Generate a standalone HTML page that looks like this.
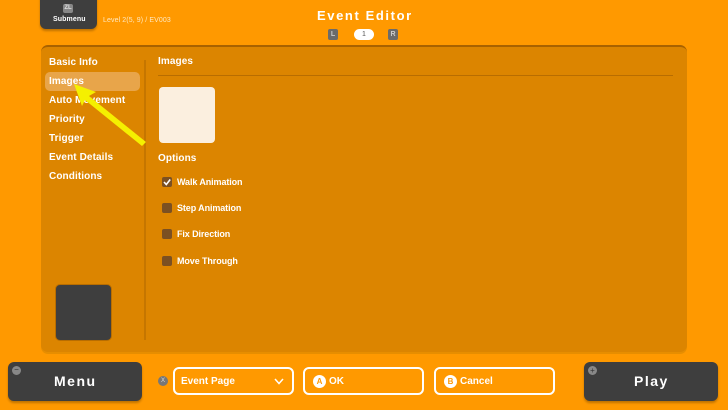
<!DOCTYPE html>
<html><head><meta charset="utf-8"><style>
*{margin:0;padding:0;box-sizing:border-box}
body{width:728px;height:410px;background:#ff9900;font-family:"Liberation Sans","DejaVu Sans",sans-serif;color:#fff;position:relative;overflow:hidden}
.a{position:absolute}
.dark{background:#3e3e3e;border-radius:6px;box-shadow:0 2px 2px rgba(0,0,0,.25)}
.t{font-size:10px;font-weight:bold;letter-spacing:.1px;white-space:nowrap}
.cb{width:10px;height:10px;background:#7b5022;border-radius:2px;position:absolute}
.btn{position:absolute;top:367px;height:28px;border:2px solid #fff;border-radius:6px;font-size:10px;font-weight:bold;padding-left:6px;display:flex;align-items:center}
.circ{display:inline-block;width:13px;height:13px;border-radius:50%;background:#fff;color:#ff9900;font-size:8px;text-align:center;line-height:13px;margin-right:3px}
</style></head><body>
<div class="a dark" style="left:40px;top:-6px;width:57px;height:35px;border-radius:0 0 6px 6px"></div>
<div class="a" style="left:63px;top:4px;width:10px;height:9px;background:#888;border-radius:2px;font-size:6px;text-align:center;color:#ddd;line-height:9px;font-weight:bold">ZL</div>
<div class="a t" style="left:53px;top:16px;font-size:7px">Submenu</div>
<div class="a t" style="left:103px;top:17px;font-size:7px;color:#ffe8c0;font-weight:normal">Level 2(5, 9) / EV003</div>
<div class="a" style="left:317px;top:8px;font-size:13px;font-weight:bold;letter-spacing:1.6px">Event Editor</div>
<div class="a" style="left:328px;top:29px;width:10px;height:11px;background:#6b6b6b;border-radius:2px;font-size:7px;text-align:center;line-height:11px;font-weight:bold;color:#ccc">L</div>
<div class="a" style="left:354px;top:29px;width:20px;height:11px;background:#fff;border-radius:6px;font-size:7px;text-align:center;line-height:11px;color:#555">1</div>
<div class="a" style="left:388px;top:29px;width:10px;height:11px;background:#6b6b6b;border-radius:2px;font-size:7px;text-align:center;line-height:11px;font-weight:bold;color:#ccc">R</div>

<div class="a" style="left:41px;top:45px;width:646px;height:307px;background:#dc8500;border-radius:7px;border-top:2px solid #a86200;box-shadow:0 2px 0 #e78e00"></div>
<div class="a" style="left:144px;top:60px;width:2px;height:280px;background:#c57600"></div>
<div class="a" style="left:45px;top:72px;width:95px;height:19px;background:#e8a54a;border-radius:5px"></div>
<div class="a t" style="left:49px;top:57px">Basic Info</div>
<div class="a t" style="left:49px;top:76px">Images</div>
<div class="a t" style="left:49px;top:95px">Auto Movement</div>
<div class="a t" style="left:49px;top:114px">Priority</div>
<div class="a t" style="left:49px;top:133px">Trigger</div>
<div class="a t" style="left:49px;top:152px">Event Details</div>
<div class="a t" style="left:49px;top:171px">Conditions</div>
<div class="a" style="left:55px;top:284px;width:57px;height:57px;background:#3e3e3e;border-radius:5px;border:1px solid #b86d00"></div>
<svg class="a" style="left:70px;top:80px" width="80" height="70"><polygon points="4,4 26,12 19,16 76,62 72,66 15,20 12,26" fill="#f5f000"/></svg>

<div class="a t" style="left:158px;top:56px">Images</div>
<div class="a" style="left:158px;top:75px;width:515px;height:1px;background:#b86d00"></div>
<div class="a" style="left:159px;top:87px;width:56px;height:56px;background:#fbefdf;border-radius:4px"></div>
<div class="a t" style="left:158px;top:153px">Options</div>
<div class="cb" style="left:162px;top:177px"></div>
<svg class="a" style="left:162px;top:177px" width="10" height="10"><path d="M2 5 L4.3 7.5 L8.2 2.5" stroke="#fff" stroke-width="1.6" fill="none"/></svg>
<div class="a t" style="left:177px;top:177px;font-size:9px;letter-spacing:-.1px">Walk Animation</div>
<div class="cb" style="left:162px;top:203px"></div>
<div class="a t" style="left:177px;top:203px;font-size:9px;letter-spacing:-.1px">Step Animation</div>
<div class="cb" style="left:162px;top:229px"></div>
<div class="a t" style="left:177px;top:229px;font-size:9px;letter-spacing:-.1px">Fix Direction</div>
<div class="cb" style="left:162px;top:256px"></div>
<div class="a t" style="left:177px;top:256px;font-size:9px;letter-spacing:-.1px">Move Through</div>

<div class="a dark" style="left:8px;top:362px;width:134px;height:39px"></div>
<div class="a" style="left:12px;top:366px;width:9px;height:9px;border-radius:50%;background:#888;font-size:8px;line-height:8px;text-align:center;color:#333">−</div>
<div class="a" style="left:54px;top:373px;font-size:14px;font-weight:bold;letter-spacing:1.5px">Menu</div>
<div class="a dark" style="left:584px;top:362px;width:134px;height:39px"></div>
<div class="a" style="left:588px;top:366px;width:9px;height:9px;border-radius:50%;background:#888;font-size:8px;line-height:9px;text-align:center;color:#333">+</div>
<div class="a" style="left:634px;top:373px;font-size:14px;font-weight:bold;letter-spacing:1.5px">Play</div>
<div class="a" style="left:158px;top:376px;width:10px;height:10px;border-radius:50%;background:#777;font-size:6px;line-height:10px;text-align:center;color:#ddd">X</div>
<div class="btn" style="left:173px;width:121px">Event Page<svg style="position:absolute;right:8px;top:9px" width="10" height="7"><path d="M1 1 L5 5.5 L9 1" stroke="#fff" stroke-width="1.5" fill="none"/></svg></div>
<div class="btn" style="left:303px;width:121px;padding-left:8px"><span class="circ">A</span>OK</div>
<div class="btn" style="left:434px;width:121px;padding-left:8px"><span class="circ">B</span>Cancel</div>
</body></html>
